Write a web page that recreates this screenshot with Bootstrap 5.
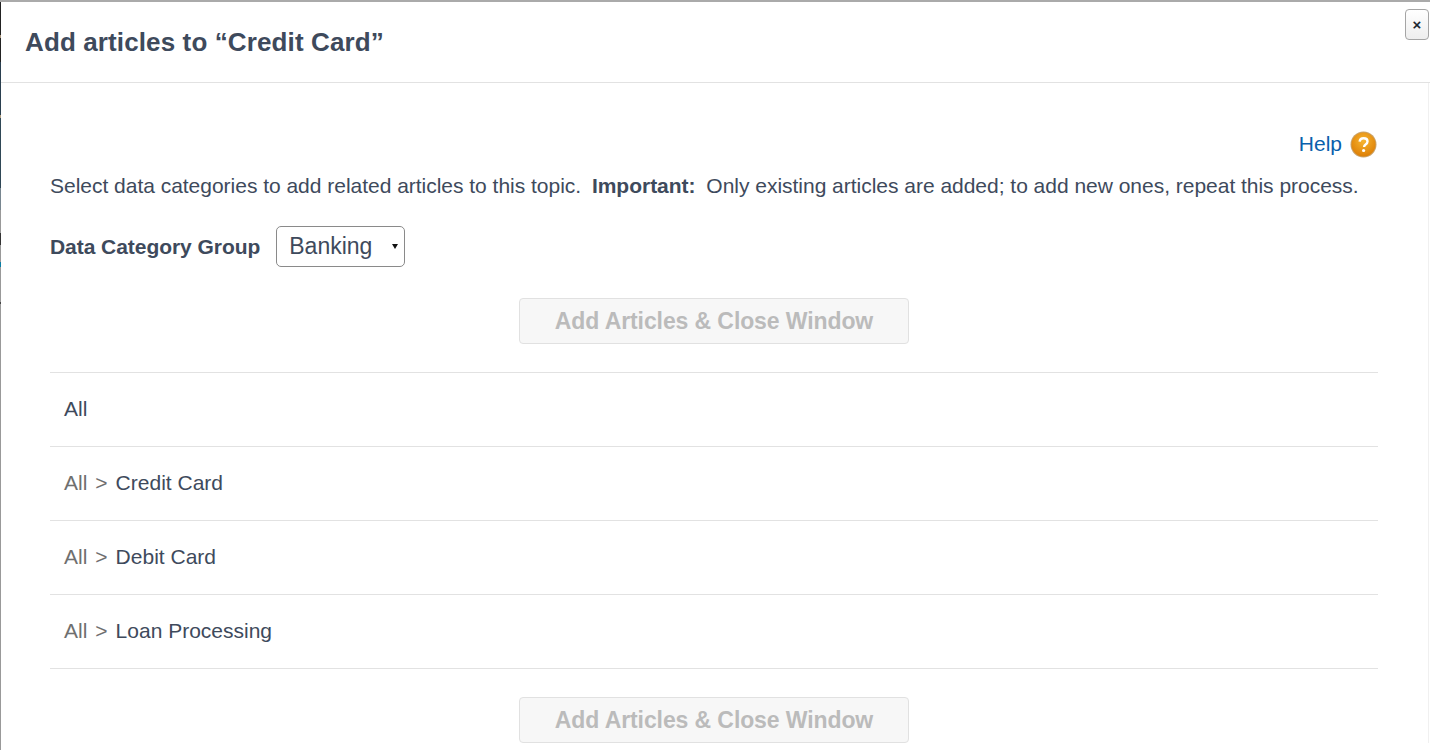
<!DOCTYPE html>
<html lang="en">

<head>
    <title>Add articles</title>
    <meta charset="UTF-8">
    <link href="https://cdn.jsdelivr.net/npm/bootstrap@5.3.0/dist/css/bootstrap.min.css" rel="stylesheet">
    <style>
        html, body {
            height: 750px;
            overflow: hidden;
        }

        body {
            font-family: "Liberation Sans", Arial, sans-serif;
            font-size: 21px;
            color: #3e4a5c;
            background: #fff;
        }

        /* page behind the dialog shows through as a 1px strip on the left */
        .dialog-frame {
            height: 750px;
            border-top: 2px solid #aaa;
            padding-left: 1px;
            position: relative;
            background: linear-gradient(#222 0 33px, #a8957c 33px 36px, #222 36px 60px, #2a3f4f 60px 113px,
                    #b09d80 113px 116px, #2f4756 116px 186px, #788690 186px 208px, #999 208px 231px,
                    #333 231px 243px, #999 243px 260px, #0a7ea4 260px 265px, #999 265px 300px,
                    #444 300px 302px, #999 302px) no-repeat left top / 1px 100%;
        }

        .dialog-head {
            height: 81px;
            padding-left: 24px;
            padding-top: 2px;
            border-bottom: 1px solid #e2e2e2;
        }

        .dialog-title {
            font-family: inherit;
            font-size: 26px;
            font-weight: 700;
            letter-spacing: .12px;
            color: #3e4a5c;
            margin: 0;
        }

        .close-x {
            position: absolute;
            top: 7px;
            right: 1px;
            width: 24px;
            height: 31px;
            padding: 0;
            font-size: 15px;
            line-height: 1;
            font-weight: 700;
            color: #1c2733;
            background: linear-gradient(#fff, #eee);
            border: 1px solid #a5a5a5;
            border-radius: 4px;
        }

        .dialog-body {
            padding: 46px 50px 0 49px;
            margin-right: 1px;
            border-right: 1px solid #f0f0f0;
        }

        .help-row {
            height: 30px;
            color: #0a60ac;
        }

        .help-row svg {
            margin-right: 1px;
        }

        .help-link {
            color: #0a60ac;
            text-decoration: none;
        }

        .intro-text {
            margin: 14px 0 0;
            line-height: 26px;
            letter-spacing: -.02px;
            white-space: nowrap;
        }

        .intro-text b {
            margin: 0 5px;
        }

        .group-row {
            margin-top: 27px;
            height: 41px;
        }

        .group-label {
            font-weight: 700;
            letter-spacing: -.05px;
            margin-right: 16px;
        }

        .group-pick {
            width: 129px;
            height: 41px;
            border: 1px solid #8a8a8a;
            border-radius: 5px;
            padding: 0 12px;
            font-size: 23px;
            color: #3e4a5c;
            position: relative;
        }

        .group-pick::after {
            content: "";
            position: absolute;
            right: 6px;
            top: 17px;
            border: 3.5px solid transparent;
            border-top: 5px solid #111;
            border-bottom: 0;
        }

        .add-btn {
            width: 390px;
            height: 46px;
            padding: 1px 0 0;
            font-size: 23px;
            font-weight: 700;
            letter-spacing: -.1px;
            color: #bbb;
            background: #f7f7f7;
            border: 1px solid #e1e1e1;
            border-radius: 4px;
        }

        .add-btn:disabled {
            color: #bbb;
            background: #f7f7f7;
            border-color: #e1e1e1;
            opacity: 1;
        }

        .top-action {
            margin-top: 31px;
            margin-bottom: 28px;
        }

        .cat-list {
            border-top: 1px solid #e2e2e2;
        }

        .cat-item {
            height: 74px;
            padding-left: 14px;
            padding-bottom: 2px;
            border-bottom: 1px solid #e2e2e2;
        }

        .crumb {
            color: #6f6f6f;
        }

        .crumb-sep {
            color: #6f6f6f;
            margin: 0 8px 0 8px;
        }

        .bottom-action {
            margin-top: 28px;
        }
    </style>
</head>

<body>
    <div class="dialog-frame">
        <div class="dialog-head d-flex align-items-center">
            <h1 class="dialog-title">Add articles to “Credit Card”</h1>
        </div>
        <button class="close-x d-flex align-items-center justify-content-center" type="button">×</button>

        <div class="dialog-body">
            <div class="help-row d-flex justify-content-end align-items-center gap-2">
                <a href="#" class="help-link">Help</a>
                <svg width="27" height="27" viewBox="0 0 27 27">
                    <defs>
                        <radialGradient id="helpFill" cx="50%" cy="35%" r="65%">
                            <stop offset="0" stop-color="#f7b531" />
                            <stop offset="1" stop-color="#dd7f06" />
                        </radialGradient>
                    </defs>
                    <circle cx="13.5" cy="13.5" r="13" fill="#c9a36b" />
                    <circle cx="13.5" cy="13.5" r="12" fill="url(#helpFill)" />
                    <path d="M9.6 10.6c.3-2.2 1.900-3.300 4-3.300 2.300 0 3.900 1.300 3.900 3.200 0 1.500-.8 2.300-1.900 3-1.100.7-1.500 1.200-1.500 2.400" fill="none" stroke="#fff" stroke-width="2.400" />
                    <circle cx="13.600" cy="19.500" r="1.600" fill="#fff" />
                </svg>
            </div>

            <p class="intro-text">Select data categories to add related articles to this topic. <b>Important:</b> Only existing articles are added; to add new ones, repeat this process.</p>

            <div class="group-row d-flex align-items-center">
                <span class="group-label">Data Category Group</span>
                <div class="group-pick d-flex align-items-center">Banking</div>
            </div>

            <div class="top-action text-center">
                <button class="add-btn" type="button" disabled>Add Articles &amp; Close Window</button>
            </div>

            <div class="cat-list">
                <div class="cat-item d-flex align-items-center">All</div>
                <div class="cat-item d-flex align-items-center"><span class="crumb">All</span><span class="crumb-sep">&gt;</span>Credit Card</div>
                <div class="cat-item d-flex align-items-center"><span class="crumb">All</span><span class="crumb-sep">&gt;</span>Debit Card</div>
                <div class="cat-item d-flex align-items-center"><span class="crumb">All</span><span class="crumb-sep">&gt;</span>Loan Processing</div>
            </div>

            <div class="bottom-action text-center">
                <button class="add-btn" type="button" disabled>Add Articles &amp; Close Window</button>
            </div>
        </div>
    </div>

    <script src="https://cdn.jsdelivr.net/npm/bootstrap@5.3.0/dist/js/bootstrap.bundle.min.js"></script>
</body>

</html>
